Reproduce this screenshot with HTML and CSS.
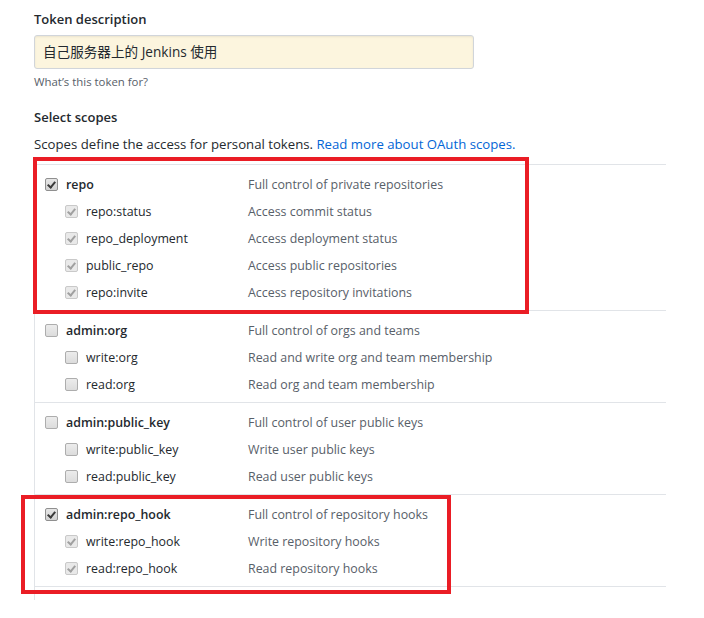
FILE: index.html
```html
<!DOCTYPE html>
<html lang="en">
<head>
<meta charset="utf-8">
<title>Personal access token</title>
<link rel="stylesheet" href="styles.css">
</head>
<body>
<div class="viewport">
  <form class="token-form">
    <div class="field-label">Token description</div>
    <div class="text-input">自己服务器上的 Jenkins 使用</div>
    <div class="note">What’s this token for?</div>

    <div class="field-label scopes-title">Select scopes</div>
    <p class="scopes-intro">Scopes define the access for personal tokens. <a href="#" class="link">Read more about OAuth scopes.</a></p>

    <div class="scope-list">
      <div class="scope-group">
        <div class="scope-row parent"><span class="cb checked"></span><span class="name">repo</span><span class="desc">Full control of private repositories</span></div>
        <div class="scope-row child"><span class="cb checked-dis"></span><span class="name">repo:status</span><span class="desc">Access commit status</span></div>
        <div class="scope-row child"><span class="cb checked-dis"></span><span class="name">repo_deployment</span><span class="desc">Access deployment status</span></div>
        <div class="scope-row child"><span class="cb checked-dis"></span><span class="name">public_repo</span><span class="desc">Access public repositories</span></div>
        <div class="scope-row child"><span class="cb checked-dis"></span><span class="name">repo:invite</span><span class="desc">Access repository invitations</span></div>
      </div>
      <div class="scope-group">
        <div class="scope-row parent"><span class="cb"></span><span class="name">admin:org</span><span class="desc">Full control of orgs and teams</span></div>
        <div class="scope-row child"><span class="cb"></span><span class="name">write:org</span><span class="desc">Read and write org and team membership</span></div>
        <div class="scope-row child"><span class="cb"></span><span class="name">read:org</span><span class="desc">Read org and team membership</span></div>
      </div>
      <div class="scope-group">
        <div class="scope-row parent"><span class="cb"></span><span class="name">admin:public_key</span><span class="desc">Full control of user public keys</span></div>
        <div class="scope-row child"><span class="cb"></span><span class="name">write:public_key</span><span class="desc">Write user public keys</span></div>
        <div class="scope-row child"><span class="cb"></span><span class="name">read:public_key</span><span class="desc">Read user public keys</span></div>
      </div>
      <div class="scope-group">
        <div class="scope-row parent"><span class="cb checked"></span><span class="name">admin:repo_hook</span><span class="desc">Full control of repository hooks</span></div>
        <div class="scope-row child"><span class="cb checked-dis"></span><span class="name">write:repo_hook</span><span class="desc">Write repository hooks</span></div>
        <div class="scope-row child"><span class="cb checked-dis"></span><span class="name">read:repo_hook</span><span class="desc">Read repository hooks</span></div>
      </div>
      <div class="scope-group">
        <div class="scope-row parent"><span class="cb"></span></div>
      </div>
    </div>
  </form>
  <div class="highlight box-repo"></div>
  <div class="highlight box-hook"></div>
</div>
</body>
</html>
```
FILE: styles.css
```css
* { box-sizing: border-box; }
html, body { margin: 0; padding: 0; background: #fff; }
body {
  font-family: "Open Sans", "Noto Sans CJK SC", sans-serif;
  color: #24292e;
}
.viewport {
  position: relative;
  height: 600px;
  overflow: hidden;
}
.token-form {
  padding: 9px 0 0 34px;
}
.field-label {
  font-size: 13px;
  font-weight: 600;
  line-height: 20px;
}
.text-input {
  margin-top: 6px;
  width: 440px;
  height: 34px;
  padding: 0 8px;
  border: 1px solid #d1d5da;
  border-radius: 3px;
  background: #fcf5de;
  font-size: 13.6px;
  line-height: 32px;
  box-shadow: inset 0 1px 2px rgba(27,31,35,0.075);
}
.note {
  margin-top: 4px;
  font-size: 11.4px;
  line-height: 18px;
  color: #586069;
}
.scopes-title { margin-top: 16px; }
.scopes-intro {
  margin: 7px 0 0;
  font-size: 13.2px;
  line-height: 20px;
}
.link { color: #0366d6; text-decoration: none; }

.scope-list {
  margin-top: 10px;
  width: 632px;
  border-left: 1px solid #e1e4e8;
}
.scope-group {
  border-top: 1px solid #e1e4e8;
  padding: 6px 0 4px;
}
.scope-row {
  display: grid;
  grid-template-columns: 10px 13px 190px 1fr;
  align-items: center;
  height: 27px;
  font-size: 12.4px;
}
.scope-row.child { grid-template-columns: 30px 13px 170px 1fr; }
.scope-row .cb { grid-column: 2; }
.scope-row .name { grid-column: 3; padding-left: 8px; white-space: nowrap; }
.scope-row .desc { grid-column: 4; color: #586069; white-space: nowrap; }
.scope-row.parent .name { font-weight: 600; }

.cb {
  display: block;
  width: 13px;
  height: 13px;
  margin-top: -1px;
  border: 1px solid #adadad;
  border-radius: 2px;
  background: linear-gradient(#ececec, #dcdcdc);
  position: relative;
}
.cb.checked { border-color: #8f8f8f; background: linear-gradient(#e6e6e6, #d2d2d2); }
.cb.checked::after,
.cb.checked-dis::after {
  content: "";
  position: absolute;
  left: 3px;
  top: 1px;
  width: 3px;
  height: 6px;
  border-right: 2px solid #3a3a3a;
  border-bottom: 2px solid #3a3a3a;
  transform: rotate(40deg);
}
.cb.checked-dis { border-color: #c9c9c9; background: #e9e9e9; }
.cb.checked-dis::after { border-color: #a0a0a0; }

.highlight {
  position: absolute;
  border: 4px solid #ea1d25;
  pointer-events: none;
}
.box-repo { left: 33px; top: 157px; width: 496px; height: 157px; }
.box-hook { left: 21px; top: 495px; width: 430px; height: 99px; }
```
